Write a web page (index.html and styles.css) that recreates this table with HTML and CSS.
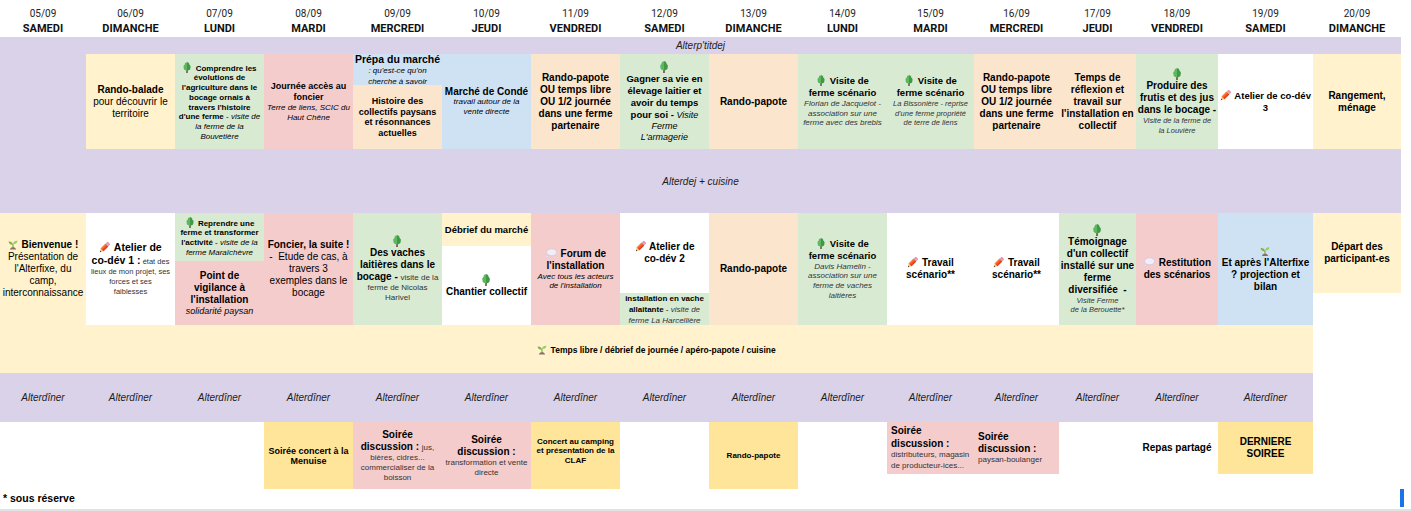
FILE: index.html
```html
<!DOCTYPE html>
<html lang="fr">
<head>
<meta charset="utf-8">
<title>Alterfixe – programme</title>
<link rel="stylesheet" href="styles.css">
</head>
<body>
<svg class="defs" aria-hidden="true">
  <symbol id="tree" viewBox="0 0 10 12">
    <rect x="4.2" y="7.6" width="1.6" height="4.4" fill="#6d4c41"/>
    <path d="M5 .3C6.6.3 7.6 1.6 7.5 2.9 8.8 3.5 9.2 5.3 8.5 6.3 9.1 7.8 7.6 9.4 5 9.4 2.4 9.4.9 7.8 1.5 6.3.8 5.3 1.2 3.5 2.5 2.9 2.4 1.6 3.4.3 5 .3Z" fill="#5cb860"/>
    <path d="M5 .3C6.6.3 7.6 1.6 7.5 2.9 8.8 3.5 9.2 5.3 8.5 6.3 9.1 7.8 7.6 9.4 5 9.4Z" fill="#2e7d32" opacity=".55"/>
  </symbol>
  <symbol id="pencil" viewBox="0 0 12 12">
    <g transform="rotate(-45 6 6)">
      <path d="M-1.2 6 2.2 3.9V8.1Z" fill="#ffcc80"/>
      <path d="M-1.2 6 .3 5.1V6.9Z" fill="#4e342e"/>
      <rect x="2.2" y="3.9" width="7.4" height="4.2" fill="#f4511e"/>
      <rect x="2.2" y="3.9" width="7.4" height="1.4" fill="#ff7a45"/>
      <rect x="2.2" y="6.8" width="7.4" height="1.3" fill="#d84315"/>
      <rect x="9.6" y="3.9" width="1.1" height="4.2" fill="#9e9e9e"/>
      <rect x="10.7" y="3.9" width="2.3" height="4.2" rx=".8" fill="#f48fb1"/>
    </g>
  </symbol>
  <symbol id="sprout" viewBox="0 0 12 12">
    <path d="M6 10.5V5.6" stroke="#689f38" stroke-width="1.2" fill="none"/>
    <path d="M6 6.2C5.4 3.2 3.4 2.1.7 2.4 1 5 3 6.6 6 6.2Z" fill="#7cb342"/>
    <path d="M6 5.4C6.6 2.5 8.6 1.2 11.3 1.5 11 4.3 9 5.8 6 5.4Z" fill="#9ccc65"/>
    <path d="M2.3 12C2.8 10.1 4.3 9.4 6 9.4S9.2 10.1 9.7 12Z" fill="#8d6e63"/>
  </symbol>
  <symbol id="bubble" viewBox="0 0 12 10">
    <ellipse cx="6.6" cy="4.3" rx="5" ry="3.5" fill="#f1eef8" stroke="#cdc6e0" stroke-width=".7"/>
    <circle cx="2.2" cy="8.4" r="1.1" fill="#f1eef8" stroke="#cdc6e0" stroke-width=".6"/>
  </symbol>
</svg>

<main class="sheet">
  <!-- header -->
  <div class="hd"><span class="date">05/09</span><span class="day">SAMEDI</span></div>
  <div class="hd"><span class="date">06/09</span><span class="day">DIMANCHE</span></div>
  <div class="hd"><span class="date">07/09</span><span class="day">LUNDI</span></div>
  <div class="hd"><span class="date">08/09</span><span class="day">MARDI</span></div>
  <div class="hd"><span class="date">09/09</span><span class="day">MERCREDI</span></div>
  <div class="hd"><span class="date">10/09</span><span class="day">JEUDI</span></div>
  <div class="hd"><span class="date">11/09</span><span class="day">VENDREDI</span></div>
  <div class="hd"><span class="date">12/09</span><span class="day">SAMEDI</span></div>
  <div class="hd"><span class="date">13/09</span><span class="day">DIMANCHE</span></div>
  <div class="hd"><span class="date">14/09</span><span class="day">LUNDI</span></div>
  <div class="hd"><span class="date">15/09</span><span class="day">MARDI</span></div>
  <div class="hd"><span class="date">16/09</span><span class="day">MERCREDI</span></div>
  <div class="hd"><span class="date">17/09</span><span class="day">JEUDI</span></div>
  <div class="hd"><span class="date">18/09</span><span class="day">VENDREDI</span></div>
  <div class="hd"><span class="date">19/09</span><span class="day">SAMEDI</span></div>
  <div class="hd"><span class="date">20/09</span><span class="day">DIMANCHE</span></div>

  <!-- breakfast -->
  <div class="cell v all meal"><span class="it f10">Alterp'titdej</span></div>

  <!-- morning -->
  <div class="cell v"></div>
  <div class="cell y"><div class="f10 lh12"><b>Rando-balade</b><br>pour découvrir le<br>territoire</div></div>
  <div class="cell g"><div class="f8 lh97"><b><svg class="ic"><use href="#tree"/></svg> Comprendre les<br>évolutions de<br>l'agriculture dans le<br>bocage ornais à<br>travers l'histoire<br>d'une ferme</b> - <i>visite de<br>la ferme de la<br>Bouvetière</i></div></div>
  <div class="cell p"><div><div class="bold f9 lh11">Journée accès au<br>foncier</div><div class="it f8 lh10">Terre de liens, SCIC du<br>Haut Chêne</div></div></div>
  <div class="cell split">
    <div class="part b h31"><div><div class="bold f105 lh12">Prépa du marché</div><div class="it f8 lh11">: qu'est-ce qu'on<br>cherche à savoir</div></div></div>
    <div class="part o fill"><div class="bold f9 lh105">Histoire des<br>collectifs paysans<br>et résonnances<br>actuelles</div></div>
  </div>
  <div class="cell b"><div><div class="bold f10 lh11">Marché de Condé</div><div class="it f8 lh10">travail autour de la<br>vente directe</div></div></div>
  <div class="cell o"><div class="bold f10 lh12">Rando-papote<br>OU temps libre<br>OU 1/2 journée<br>dans une ferme<br>partenaire</div></div>
  <div class="cell g"><div><svg class="icb"><use href="#tree"/></svg><div class="bold f95 lh12">Gagner sa vie en<br>élevage laitier et<br>avoir du temps<br>pour soi - <span class="n it f9">Visite</span></div><div class="it f9 lh105">Ferme<br>L'armagerie</div></div></div>
  <div class="cell o"><div class="bold f10 lh12">Rando-papote</div></div>
  <div class="cell g"><div><div class="bold f95 lh12"><svg class="ic"><use href="#tree"/></svg> Visite de<br>ferme scénario</div><div class="it f8 lh95 gray">Florian de Jacquelot -<br>association sur une<br>ferme avec des brebis</div></div></div>
  <div class="cell g"><div><div class="bold f95 lh12"><svg class="ic"><use href="#tree"/></svg> Visite de<br>ferme scénario</div><div class="it f75 lh95 gray">La Bissonière - reprise<br>d'une ferme propriété<br>de terre de liens</div></div></div>
  <div class="cell o"><div class="bold f10 lh12">Rando-papote<br>OU temps libre<br>OU 1/2 journée<br>dans une ferme<br>partenaire</div></div>
  <div class="cell o"><div class="bold f10 lh12">Temps de<br>réflexion et<br>travail sur<br>l'installation en<br>collectif</div></div>
  <div class="cell g"><div><svg class="icb"><use href="#tree"/></svg><div class="bold f10 lh12">Produire des<br>frutis et des jus<br>dans le bocage -</div><div class="it f75 lh10 gray">Visite de la ferme de<br>la Louvière</div></div></div>
  <div class="cell w"><div class="bold f95 lh12"><svg class="ic pen"><use href="#pencil"/></svg> Atelier de co-dév<br>3</div></div>
  <div class="cell y"><div class="bold f10 lh12">Rangement,<br>ménage</div></div>

  <!-- lunch -->
  <div class="cell v all meal"><span class="it f10">Alterdej + cuisine</span></div>

  <!-- afternoon -->
  <div class="cell y"><div class="f10 lh12"><b><svg class="ic"><use href="#sprout"/></svg> Bienvenue !</b><br>Présentation de<br>l'Alterfixe, du<br>camp,<br>interconnaissance</div></div>
  <div class="cell w"><div class="f75 lh10 gray"><span class="bold f105 lh12 black"><svg class="ic pen"><use href="#pencil"/></svg> Atelier de<br>co-dév 1 :</span> état des<br>lieux de mon projet, ses<br>forces et ses<br>faiblesses</div></div>
  <div class="cell split">
    <div class="part g h48"><div class="f8 lh97"><b><svg class="ic"><use href="#tree"/></svg> Reprendre une<br>ferme et transformer<br>l'activité</b> - <i>visite de la<br>ferme Maraîchèvre</i></div></div>
    <div class="part p fill"><div><div class="bold f10 lh12">Point de<br>vigilance à<br>l'installation</div><div class="it f9 lh11">solidarité paysan</div></div></div>
  </div>
  <div class="cell p"><div class="f10 lh12"><b>Foncier, la suite !</b><br>-&nbsp; Etude de cas, à<br>travers 3<br>exemples dans le<br>bocage</div></div>
  <div class="cell g"><div><svg class="icb"><use href="#tree"/></svg><div class="f8 lh10 gray"><span class="bold f10 lh12 black">Des vaches<br>laitières dans le<br>bocage - </span>visite de la<br>ferme de Nicolas<br>Harivel</div></div></div>
  <div class="cell split">
    <div class="part y h33"><div class="bold f95 lh12">Débrief du marché</div></div>
    <div class="part w fill"><div><svg class="icb"><use href="#tree"/></svg><div class="bold f10 lh12">Chantier collectif</div></div></div>
  </div>
  <div class="cell p"><div><div class="bold f10 lh12"><svg class="ic wide"><use href="#bubble"/></svg> Forum de<br>l'installation</div><div class="it f8 lh95">Avec tous les acteurs<br>de l'installation</div></div></div>
  <div class="cell split">
    <div class="part w h80"><div class="bold f10 lh12"><svg class="ic pen"><use href="#pencil"/></svg> Atelier de<br>co-dév 2</div></div>
    <div class="part g fill top"><div class="f8 lh11"><b>installation en vache<br>allaitante</b> - <i class="gray">visite de<br>ferme La Harcellière</i></div></div>
  </div>
  <div class="cell o"><div class="bold f10 lh12">Rando-papote</div></div>
  <div class="cell g"><div><div class="bold f95 lh12"><svg class="ic"><use href="#tree"/></svg> Visite de<br>ferme scénario</div><div class="it f8 lh97 gray">Davis Hamelin -<br>association sur une<br>ferme de vaches<br>laitières</div></div></div>
  <div class="cell w"><div class="bold f10 lh12"><svg class="ic pen"><use href="#pencil"/></svg> Travail<br>scénario**</div></div>
  <div class="cell w"><div class="bold f10 lh12"><svg class="ic pen"><use href="#pencil"/></svg> Travail<br>scénario**</div></div>
  <div class="cell g"><div><svg class="icb"><use href="#tree"/></svg><div class="bold f10 lh12">Témoignage<br>d'un collectif<br>installé sur une<br>ferme<br>diversifiée&nbsp; -</div><div class="it f75 lh95 gray">Visite Ferme<br>de la Berouette*</div></div></div>
  <div class="cell p"><div class="bold f10 lh12"><svg class="ic wide"><use href="#bubble"/></svg> Restitution<br>des scénarios</div></div>
  <div class="cell b"><div><svg class="icb"><use href="#sprout"/></svg><div class="bold f10 lh12">Et après l'Alterfixe<br>? projection et<br>bilan</div></div></div>
  <div class="cell split">
    <div class="part y h80"><div class="bold f10 lh12">Départ des<br>participant-es</div></div>
    <div class="part w fill"></div>
  </div>

  <!-- free time -->
  <div class="cell y most"><div class="bold f85"><svg class="ic"><use href="#sprout"/></svg> Temps libre / débrief de journée / apéro-papote / cuisine</div></div>
  <div class="cell w"></div>

  <!-- dinner -->
  <div class="cell v meal"><span class="it f10">Alterdîner</span></div>
  <div class="cell v meal"><span class="it f10">Alterdîner</span></div>
  <div class="cell v meal"><span class="it f10">Alterdîner</span></div>
  <div class="cell v meal"><span class="it f10">Alterdîner</span></div>
  <div class="cell v meal"><span class="it f10">Alterdîner</span></div>
  <div class="cell v meal"><span class="it f10">Alterdîner</span></div>
  <div class="cell v meal"><span class="it f10">Alterdîner</span></div>
  <div class="cell v meal"><span class="it f10">Alterdîner</span></div>
  <div class="cell v meal"><span class="it f10">Alterdîner</span></div>
  <div class="cell v meal"><span class="it f10">Alterdîner</span></div>
  <div class="cell v meal"><span class="it f10">Alterdîner</span></div>
  <div class="cell v meal"><span class="it f10">Alterdîner</span></div>
  <div class="cell v meal"><span class="it f10">Alterdîner</span></div>
  <div class="cell v meal"><span class="it f10">Alterdîner</span></div>
  <div class="cell v meal"><span class="it f10">Alterdîner</span></div>
  <div class="cell w"></div>

  <!-- evening -->
  <div class="cell w"></div>
  <div class="cell w"></div>
  <div class="cell w"></div>
  <div class="cell gold"><div class="bold f9 lh10">Soirée concert à la<br>Menuise</div></div>
  <div class="cell p"><div class="f8 lh10 gray"><span class="bold f10 lh12 black">Soirée<br>discussion : </span>jus,<br>bières, cidres...<br>commercialiser de la<br>boisson</div></div>
  <div class="cell p"><div class="f8 lh10 gray"><span class="bold f10 lh12 black">Soirée<br>discussion :</span><br>transformation et vente<br>directe</div></div>
  <div class="cell gold raise"><div class="bold f8 lh95">Concert au camping<br>et présentation de la<br>CLAF</div></div>
  <div class="cell w"></div>
  <div class="cell gold"><div class="bold f8 lh10">Rando-papote</div></div>
  <div class="cell w"></div>
  <div class="cell split">
    <div class="part p h52 left"><div class="f8 lh105 gray"><span class="bold f10 lh12 black">Soirée<br>discussion :</span><br>distributeurs, magasin<br>de producteur-ices...</div></div>
    <div class="part w fill"></div>
  </div>
  <div class="cell split">
    <div class="part p h52 left"><div class="f8 lh10 gray"><span class="bold f10 lh12 black">Soirée<br>discussion :</span><br>paysan-boulanger</div></div>
    <div class="part w fill"></div>
  </div>
  <div class="cell w"></div>
  <div class="cell split">
    <div class="part w h52"><div class="bold f10 lh12">Repas partagé</div></div>
    <div class="part w fill"></div>
  </div>
  <div class="cell split">
    <div class="part gold h52"><div class="bold f10 lh12">DERNIERE<br>SOIREE</div></div>
    <div class="part w fill"></div>
  </div>
  <div class="cell w"></div>
</main>

<footer class="note">
  <span class="note-text">* sous réserve</span>
  <span class="handle"></span>
</footer>
<div class="rule"></div>
</body>
</html>
```

FILE: styles.css
```css
* { box-sizing: border-box; }

html, body {
  margin: 0;
  padding: 0;
  background: #ffffff;
}

body {
  width: 1411px;
  height: 511px;
  overflow: hidden;
  font-family: "Liberation Sans", Arial, sans-serif;
  color: #000;
}

.defs {
  position: absolute;
  width: 0;
  height: 0;
  overflow: hidden;
}

.sheet {
  display: grid;
  grid-template-columns: 86px repeat(9, 89px) 87px 85px 77px 82px 95px 88px;
  grid-template-rows: 37px 17px 95px 64px 112px 48px 49px 67px;
  width: 1401px;
}

/* header */
.hd {
  display: flex;
  flex-direction: column;
  align-items: center;
  padding-top: 6px;
  font-family: Roboto, "Liberation Sans", sans-serif;
  background: #fff;
}
.date {
  font-size: 10px;
  line-height: 15px;
  color: #222;
}
.day {
  font-size: 11px;
  line-height: 16px;
  font-weight: bold;
  color: #111;
}

/* cells */
.cell {
  display: flex;
  align-items: center;
  justify-content: center;
  text-align: center;
  padding: 0 1px;
  overflow: hidden;
  min-width: 0;
}
.split {
  flex-direction: column;
  align-items: stretch;
  justify-content: flex-start;
  padding: 0;
}
.part {
  display: flex;
  align-items: center;
  justify-content: center;
  text-align: center;
  padding: 0 1px;
  overflow: hidden;
  flex: none;
}
.part.fill { flex: 1 1 auto; }
.part.top { align-items: flex-start; }
.part.left {
  justify-content: flex-start;
  text-align: left;
  padding-left: 4px;
}
.raise { padding-bottom: 9px; }

.h31 { height: 31px; }
.h33 { height: 33px; }
.h48 { height: 48px; }
.h52 { height: 52px; }
.h80 { height: 80px; }

.all { grid-column: span 16; }
.most { grid-column: span 15; }

.meal { color: #1d1d1d; }

/* colours */
.v { background: #d9d2e9; }
.y { background: #fff2cc; }
.g { background: #d9ead3; }
.p { background: #f4cccc; }
.o { background: #fce5cd; }
.b { background: #cfe2f3; }
.gold { background: #ffe599; }
.w { background: #ffffff; }

/* type */
.bold { font-weight: bold; }
.n { font-weight: normal; }
.it { font-style: italic; }
.gray { color: #333; }
.black { color: #000; }

.f75 { font-size: 7.5px; }
.f8 { font-size: 8px; }
.f85 { font-size: 8.5px; }
.f9 { font-size: 9px; }
.f95 { font-size: 9.5px; }
.f10 { font-size: 10px; }
.f105 { font-size: 10.5px; }

.lh95 { line-height: 9.5px; }
.lh97 { line-height: 9.7px; }
.lh10 { line-height: 10px; }
.lh105 { line-height: 10.5px; }
.lh11 { line-height: 11px; }
.lh12 { line-height: 12px; }

/* icons */
.ic {
  display: inline-block;
  width: 10px;
  height: 11px;
  vertical-align: -2px;
  margin-right: 1px;
}
.ic.pen { width: 11px; height: 11px; }
.ic.wide { width: 12px; height: 10px; vertical-align: -1px; }
.icb {
  display: block;
  width: 10px;
  height: 12px;
  margin: 0 auto;
}

/* footer */
.note {
  display: flex;
  justify-content: space-between;
  align-items: flex-start;
  height: 20px;
  padding-left: 3px;
}
.note-text {
  font-size: 10.5px;
  font-weight: bold;
  line-height: 18px;
}
.handle {
  width: 4px;
  height: 18px;
  margin-right: 7px;
  background: #1a73e8;
}
.rule {
  height: 2px;
  background: #e2e2e2;
}
```
